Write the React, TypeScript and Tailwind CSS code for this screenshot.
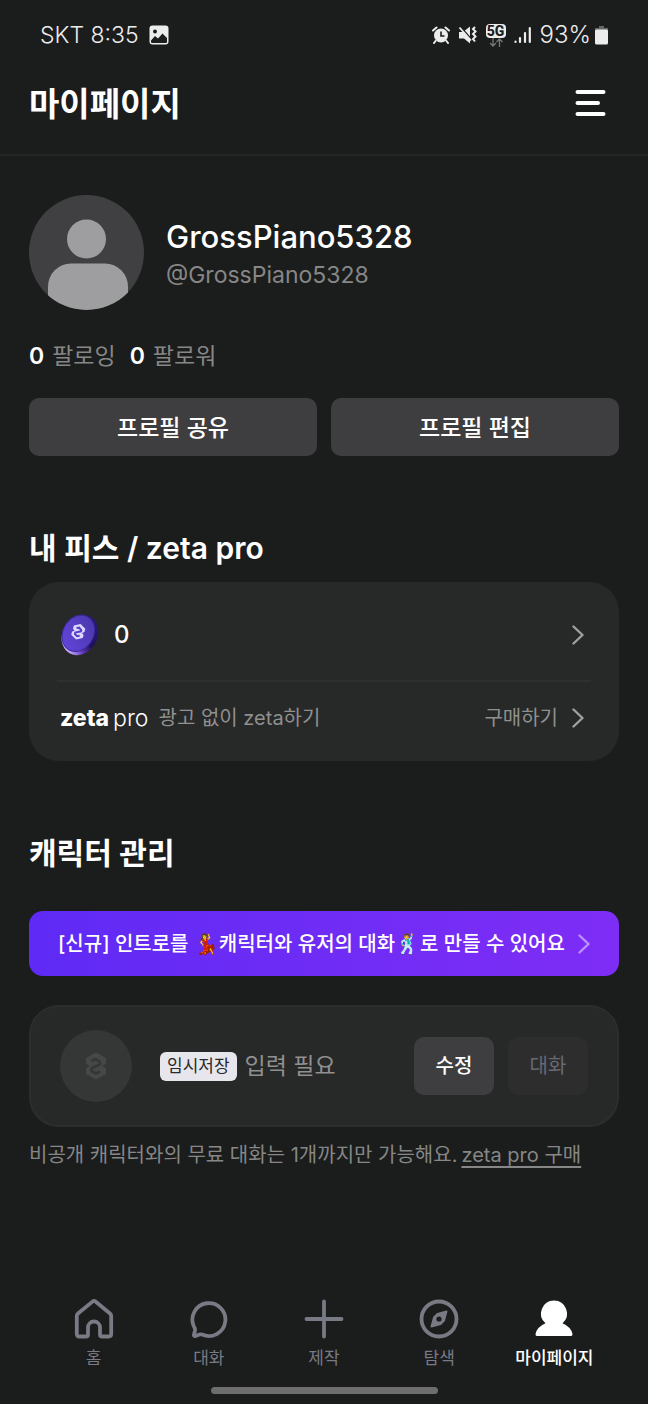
import { ReactNode } from "react";

function Chevron({ className = "" }: { className?: string }) {
  return (
    <svg viewBox="0 0 12 20" className={`h-5 w-3 shrink-0 ${className}`} fill="none" stroke="currentColor" strokeWidth="2.4" strokeLinecap="round" strokeLinejoin="round" aria-hidden="true">
      <path d="M1.5 1.5 10.5 10l-9 8.5" />
    </svg>
  );
}

function ZetaMark({ className = "", cut }: { className?: string; cut: string }) {
  return (
    <svg viewBox="0 0 22 28" className={className} fill="currentColor" aria-hidden="true">
      <path d="M11 .5 21 6v5.500L17.500 14l3.500 2.500V22l-10 5.500L1 22v-5.500L4.500 14 1 11.500V6z" />
      <path d="M6.500 8.800 10.500 7l4.500 3v2l-8.500 4.500v2.500l4.500 2.500 4-2" fill="none" stroke={cut} strokeWidth="2.600" strokeLinejoin="round" />
    </svg>
  );
}

function Coin() {
  return (
    <svg viewBox="0 0 40 42" className="h-[42px] w-10 shrink-0" aria-hidden="true">
      <defs>
        <linearGradient id="rim" x1=".9" y1=".1" x2=".5" y2="1">
          <stop offset="0" stopColor="#2a1a78" />
          <stop offset=".45" stopColor="#1f1058" />
          <stop offset=".7" stopColor="#5a35b4" />
          <stop offset="1" stopColor="#c9a4ff" />
        </linearGradient>
        <linearGradient id="face" x1=".8" y1="0" x2=".2" y2="1">
          <stop offset="0" stopColor="#4a38ac" />
          <stop offset="1" stopColor="#6344dc" />
        </linearGradient>
      </defs>
      <ellipse cx="20" cy="21" rx="17.500" ry="21" transform="rotate(30 20 21)" fill="url(#rim)" />
      <ellipse cx="18.300" cy="19.300" rx="15.300" ry="19" transform="rotate(30 18.300 19.300)" fill="url(#face)" stroke="#3b2a9a" strokeWidth="1" />
      <g transform="translate(11.500 9.500) rotate(16 7 9) scale(.6)">
        <path d="M11 .5 21 6v5.500L17.500 14l3.500 2.500V22l-10 5.500L1 22v-5.500L4.500 14 1 11.500V6z" fill="#ddd6ff" />
        <path d="M6.500 8.800 10.500 7l4.500 3v2l-8.500 4.500v2.500l4.500 2.500 4-2" fill="none" stroke="#5640c4" strokeWidth="3.400" />
      </g>
    </svg>
  );
}

function StatusBar() {
  return (
    <div className="flex h-[70px] items-center justify-between px-10 font-[Inter] text-[#ececec]">
      <div className="flex items-center gap-2.5 text-[23px] font-light">
        <span>SKT 8:35</span>
        <svg viewBox="0 0 20 20" className="size-5" aria-hidden="true">
          <rect x=".5" y=".5" width="19" height="19" rx="3" fill="#ececec" />
          <circle cx="6" cy="6.500" r="2" fill="#1b1c1c" />
          <path d="m2 15.500 4-4.500 3 2.500 4.500-5 4.500 4.500v4q0 1-1 1H3q-1 0-1-1z" fill="#1b1c1c" />
        </svg>
      </div>
      <div className="flex items-center gap-2 text-2xl font-light">
        <svg viewBox="0 0 18 18" className="size-[18px]" fill="#ececec" aria-hidden="true">
          <circle cx="9" cy="9.500" r="7" />
          <path d="M1 4.500 4.500 1.500M17 4.500l-3.500-3M3.500 15 2 17M14.500 15l1.500 2" stroke="#ececec" strokeWidth="2" strokeLinecap="round" />
          <path d="M9 5.500V10h3.500" fill="none" stroke="#1b1c1c" strokeWidth="1.600" />
        </svg>
        <svg viewBox="0 0 20 18" className="h-[18px] w-5" fill="#ececec" aria-hidden="true">
          <path d="M1 6h4l7-5.500v17L6 12.500H1z" />
          <path d="M2.500.5 14 14" stroke="#1b1c1c" strokeWidth="1.500" />
          <path d="m1.500 1.500 11.500 13" stroke="#ececec" strokeWidth="1.800" />
          <path d="m17 1-2 2 2.500 2.500L15 8l2.500 2.500L15 13l2 2.500" fill="none" stroke="#ececec" strokeWidth="2" />
        </svg>
        <div className="flex flex-col items-center">
          <span className="h-3.5 w-5 rounded-sm bg-[#ececec] text-center font-[Roboto] text-sm leading-[14px] font-extrabold text-[#1b1c1c]">5G</span>
          <svg viewBox="0 0 14 9" className="h-[9px] w-3.5" fill="none" stroke="#777" strokeWidth="1.300" aria-hidden="true">
            <path d="M4 0v8M1 5l3 3 3-3M10.500 9V1M7.500 4l3-3 3 3" />
          </svg>
        </div>
        <svg viewBox="0 0 18 18" className="size-[18px]" stroke="#ececec" strokeWidth="2.200" strokeLinecap="round" aria-hidden="true">
          <path d="M1.500 15.500v.5M6 12v4M11 7v9M15.800 2v14" />
        </svg>
        <div className="flex items-center gap-1">
          <span>93%</span>
          <svg viewBox="0 0 13 19" className="h-[19px] w-[13px]" aria-hidden="true">
            <path d="M4 0h5v3H4zM0 2h13v4H0z" fill="#666" />
            <rect y="3.500" width="13" height="15" rx="1.500" fill="#ececec" />
          </svg>
        </div>
      </div>
    </div>
  );
}

function Header() {
  return (
    <header className="flex h-[86px] items-start justify-between border-b-2 border-[#242525] px-[29px] pt-2.5">
      <h1 className="text-[33px] leading-[48px] font-bold">마이페이지</h1>
      <button type="button" aria-label="메뉴" className="mt-2 mr-3 flex h-8 items-center">
        <svg viewBox="0 0 32 32" className="size-8" fill="none" stroke="currentColor" strokeWidth="4" strokeLinecap="round" aria-hidden="true">
          <path d="M2.500 4h26M2.500 15h20.500M2.500 26h26" />
        </svg>
      </button>
    </header>
  );
}

function Profile() {
  return (
    <section className="pt-[39px]">
      <div className="flex items-center gap-[22px]">
        <svg viewBox="0 0 115 115" className="size-[115px] shrink-0" aria-hidden="true">
          <defs>
            <clipPath id="avatar"><circle cx="57.500" cy="57.500" r="57.500" /></clipPath>
          </defs>
          <g clipPath="url(#avatar)">
            <rect width="115" height="115" fill="#404042" />
            <circle cx="57.500" cy="44" r="19.500" fill="#9e9ea0" />
            <rect x="19" y="68.500" width="80" height="70" rx="23" fill="#9e9ea0" />
          </g>
        </svg>
        <div className="min-w-0 pt-1">
          <h2 className="text-[31px] leading-10 font-medium">GrossPiano5328</h2>
          <p className="text-[23px] leading-9 text-[#868786]">@GrossPiano5328</p>
        </div>
      </div>
      <div className="mt-7 flex gap-3.5 text-[23px] leading-9 text-[#868786]">
        <p><b className="mr-2 font-semibold text-white">0</b>팔로잉</p>
        <p><b className="mr-2 font-semibold text-white">0</b>팔로워</p>
      </div>
      <div className="mt-6 grid grid-cols-2 gap-3.5">
        {["프로필 공유", "프로필 편집"].map((label) => (
          <button key={label} type="button" className="h-[58px] rounded-[10px] bg-[#3e3e40] pt-0.5 text-[23px] font-medium">{label}</button>
        ))}
      </div>
    </section>
  );
}

function Wallet() {
  return (
    <section className="pt-[70px]">
      <h2 className="text-[30px] leading-[44px] font-semibold">내 피스 / zeta pro</h2>
      <div className="mt-3 rounded-[30px] bg-[#272828] px-7">
        <a href="#piece" className="flex h-[98px] items-center justify-between px-[3px] pt-2">
          <span className="flex items-center gap-3.5 text-2xl font-medium"><Coin />0</span>
          <Chevron className="mr-1 text-[#a0a0a0]" />
        </a>
        <a href="#pro" className="flex h-[81px] items-center border-t-2 border-[#2e2f2f] px-[3px] pb-2 text-xl text-[#8f908f]">
          <span className="flex items-baseline gap-1 text-[23px] leading-8 text-white">
            <span className="font-extrabold">zeta</span>
            <span className="font-light">pro</span>
          </span>
          <span className="ml-2.5">광고 없이 zeta하기</span>
          <span className="mr-3.5 ml-auto">구매하기</span>
          <Chevron className="mr-1 text-[#a0a0a0]" />
        </a>
      </div>
    </section>
  );
}

function Characters() {
  return (
    <section className="pt-[70px]">
      <h2 className="text-[30px] leading-[44px] font-semibold">캐릭터 관리</h2>
      <a href="#intro" className="mt-9 flex h-[65px] items-center justify-between rounded-[14px] bg-linear-to-r from-[#5f2af5] to-[#7e2df5] px-[29px] text-xl font-medium whitespace-nowrap">
        <span>[신규] 인트로를 💃캐릭터와 유저의 대화🕺로 만들 수 있어요</span>
        <Chevron className="text-[#bb94fb]" />
      </a>
      <div className="mt-[29px] flex h-[122px] items-center rounded-[30px] border-2 border-[#2c2d2d] bg-[#272828] px-[29px]">
        <div className="flex size-[72px] shrink-0 items-center justify-center rounded-full bg-[#353636]">
          <ZetaMark className="h-7 w-[22px] text-[#464747]" cut="#353636" />
        </div>
        <span className="ml-7 rounded-md bg-[#e6e6ec] px-[7px] text-[17px] leading-[29px] text-[#29292c]">임시저장</span>
        <span className="ml-2 text-[23px] text-[#8f908f]">입력 필요</span>
        <div className="ml-auto flex gap-3.5 text-xl">
          <button type="button" className="h-[58px] w-20 rounded-[10px] bg-[#3e3e40] font-medium">수정</button>
          <button type="button" disabled className="h-[58px] w-20 rounded-[10px] bg-[#2d2d2e] text-[#686974]">대화</button>
        </div>
      </div>
      <p className="mt-3 text-xl leading-8 text-[#868786]">
        비공개 캐릭터와의 무료 대화는 1개까지만 가능해요.<a href="#buy" className="ml-1 underline underline-offset-4">zeta pro 구매</a>
      </p>
    </section>
  );
}

function Tab({ label, active = false, children }: { label: string; active?: boolean; children: ReactNode }) {
  return (
    <a href={`#${label}`} aria-current={active ? "page" : undefined} className={`flex flex-1 flex-col items-center gap-[5px] text-[17px] leading-7 ${active ? "font-medium text-white" : "text-[#787a84]"}`}>
      <svg viewBox="0 0 40 40" className="size-10" fill="none" stroke="currentColor" strokeWidth="3.800" strokeLinecap="round" strokeLinejoin="round" aria-hidden="true">
        {children}
      </svg>
      {label}
    </a>
  );
}

function TabBar() {
  return (
    <nav className="mt-auto px-9 pb-2.5">
      <div className="flex">
        <Tab label="홈">
          <path d="M2.800 17q0-1.500 1.200-2.500L18.500 2.600q1.500-1.200 3 0L36 14.500q1.200 1 1.200 2.500v18q0 2.500-2.500 2.500H28q-2 0-2-2v-7a6 6 0 0 0-12 0v7q0 2-2 2H5.300q-2.500 0-2.500-2.500z" />
        </Tab>
        <Tab label="대화">
          <path d="M4.800 27.300A16.500 16.500 0 1 1 13 35.600q-1.200-.5-2.500-.1l-4 1.600q-2 .3-1.500-1.700l.9-3.400q.5-2.300-1.100-4.700z" />
        </Tab>
        <Tab label="제작">
          <path d="M20 2.500v35M2.500 20h35" />
        </Tab>
        <Tab label="탐색">
          <circle cx="20" cy="20" r="17.500" />
          <path d="M27.500 12.500 25 21.500l-3.500 3.500-9 2.500L15 18.500l3.500-3.500z" fill="currentColor" strokeWidth="2" />
          <circle cx="20" cy="20" r="2.600" fill="#1b1c1c" stroke="none" />
        </Tab>
        <Tab label="마이페이지" active>
          <path d="M20 1.500a13 13 0 0 0-8.500 22.800Q3 28 1.500 35q-.2 2 1.500 2h34q1.700 0 1.500-2Q37 28 28.500 24.300A13 13 0 0 0 20 1.500z" fill="currentColor" stroke="none" />
        </Tab>
      </div>
      <div className="mx-auto mt-[15px] h-[7px] w-[227px] rounded-full bg-[#6d6d6d]" />
    </nav>
  );
}

export default function App() {
  return (
    <div className="flex min-h-screen flex-col bg-[#1b1c1c] font-[Inter,'Noto_Sans_CJK_KR',sans-serif] text-white">
      <StatusBar />
      <Header />
      <main className="px-[29px] pb-10">
        <Profile />
        <Wallet />
        <Characters />
      </main>
      <TabBar />
    </div>
  );
}
